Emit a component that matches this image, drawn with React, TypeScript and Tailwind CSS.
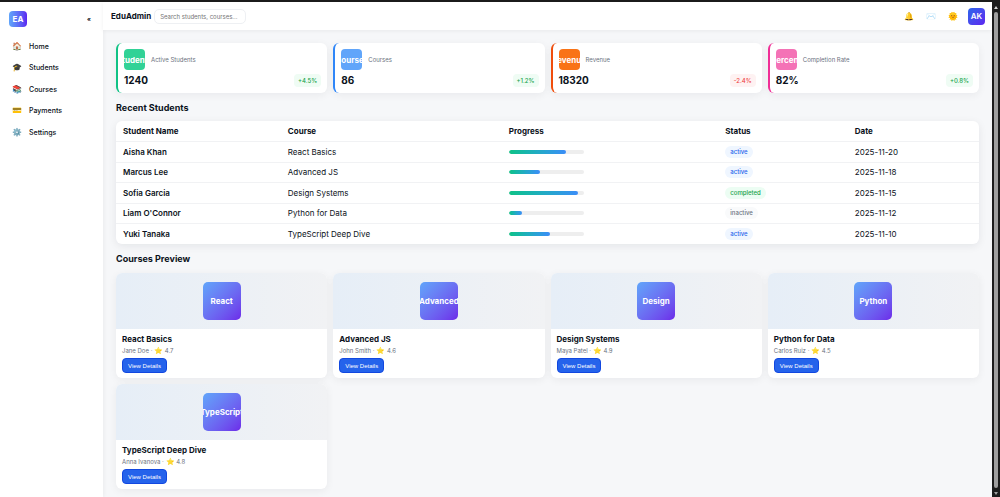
import React from 'react';

interface NavItem {
  icon: string;
  label: string;
}

interface Stat {
  tile: string;
  label: string;
  value: string;
  delta: string;
  border: string;
  fill: string;
}

interface Student {
  name: string;
  course: string;
  progress: number;
  status: 'active' | 'completed' | 'inactive';
  date: string;
}

interface Course {
  title: string;
  tile: string;
  teacher: string;
  rating: string;
}

const navItems: NavItem[] = [
  { icon: '🏠', label: 'Home' },
  { icon: '🎓', label: 'Students' },
  { icon: '📚', label: 'Courses' },
  { icon: '💳', label: 'Payments' },
  { icon: '⚙️', label: 'Settings' },
];

const stats: Stat[] = [
  { tile: 'Students', label: 'Active Students', value: '1240', delta: '+4.5%', border: 'border-[#10c285]', fill: 'bg-[#31d296]' },
  { tile: 'Courses', label: 'Courses', value: '86', delta: '+1.2%', border: 'border-[#2f86f8]', fill: 'bg-[#60a5fa]' },
  { tile: 'Revenue', label: 'Revenue', value: '18320', delta: '-2.4%', border: 'border-[#f04d0c]', fill: 'bg-[#f97316]' },
  { tile: 'Percent', label: 'Completion Rate', value: '82%', delta: '+0.8%', border: 'border-[#f02e96]', fill: 'bg-[#f472b6]' },
];

const students: Student[] = [
  { name: 'Aisha Khan', course: 'React Basics', progress: 76, status: 'active', date: '2025-11-20' },
  { name: 'Marcus Lee', course: 'Advanced JS', progress: 42, status: 'active', date: '2025-11-18' },
  { name: 'Sofia Garcia', course: 'Design Systems', progress: 92, status: 'completed', date: '2025-11-15' },
  { name: "Liam O'Connor", course: 'Python for Data', progress: 18, status: 'inactive', date: '2025-11-12' },
  { name: 'Yuki Tanaka', course: 'TypeScript Deep Dive', progress: 55, status: 'active', date: '2025-11-10' },
];

const courses: Course[] = [
  { title: 'React Basics', tile: 'React', teacher: 'Jane Doe', rating: '4.7' },
  { title: 'Advanced JS', tile: 'Advanced', teacher: 'John Smith', rating: '4.6' },
  { title: 'Design Systems', tile: 'Design', teacher: 'Maya Patel', rating: '4.9' },
  { title: 'Python for Data', tile: 'Python', teacher: 'Carlos Ruiz', rating: '4.5' },
  { title: 'TypeScript Deep Dive', tile: 'TypeScript', teacher: 'Anna Ivanova', rating: '4.8' },
];

const statusStyles = {
  active: 'bg-[#eff6ff] text-[#2563eb]',
  completed: 'bg-[#ecfdf3] text-[#16a34a]',
  inactive: 'bg-[#f9fafb] text-[#6b7280]',
};

const Sidebar: React.FC = () => (
  <aside className="w-[103px] shrink-0 bg-white shadow-[1px_0_4px_rgba(0,0,0,0.05)]">
    <div className="flex items-center justify-between pt-[9px] pl-[9px] pr-[11px]">
      <div className="flex h-4 w-[18px] items-center justify-center rounded-[4px] bg-linear-to-r from-[#60a5fa] to-[#5b21f0] text-[8px] font-bold text-white">
        EA
      </div>
      <button className="px-px text-[6px] leading-none font-bold" aria-label="Collapse sidebar">«</button>
    </div>
    <nav className="mt-[9px]">
      {navItems.map((item) => (
        <a key={item.label} href="#" className="flex items-center pl-3 text-[7px] leading-3 font-medium odd:h-[21px] even:h-[22px]">
          <span className="w-[17px] pb-0.5 text-[8px]">{item.icon}</span>
          {item.label}
        </a>
      ))}
    </nav>
  </aside>
);

const Header: React.FC = () => (
  <header className="flex h-7 items-center bg-white pl-2 pr-[7px] shadow-[0_1px_4px_rgba(0,0,0,0.06)]">
    <h1 className="text-[8px] font-bold">EduAdmin</h1>
    <input
      type="text"
      aria-label="Search"
      placeholder="Search students, courses..."
      className="ml-[3px] h-[15px] w-[92px] rounded-[5px] border border-[#eef0f3] px-[5px] text-[6px] placeholder:text-[#757575]"
    />
    <div className="ml-auto flex items-center gap-3 text-[8px]">
      <button aria-label="Notifications">🔔</button>
      <button aria-label="Messages">✉️</button>
      <button aria-label="Toggle theme">🌞</button>
      <button className="-ml-0.5 flex h-[17px] w-[17px] items-center justify-center rounded-[4px] bg-linear-to-br from-[#2563eb] to-[#5b21f0] font-semibold text-white">
        AK
      </button>
    </div>
  </header>
);

const StatCard: React.FC<{ stat: Stat }> = ({ stat }) => (
  <div className={`rounded-[6px] border-l-2 bg-white p-1.5 shadow-[0_2px_8px_rgba(15,23,42,0.06)] ${stat.border}`}>
    <div className="flex items-center gap-1.5">
      <div className={`flex h-[21px] w-[21px] items-center justify-center overflow-hidden rounded-[4px] text-[8px] font-bold text-white ${stat.fill}`}>
        {stat.tile}
      </div>
      <span className="text-[6px] leading-2 text-[#6b7280]">{stat.label}</span>
    </div>
    <div className="mt-1 flex h-[13px] items-center justify-between">
      <span className="text-[10px] font-bold">{stat.value}</span>
      <span
        className={`rounded-[4px] px-1 py-px text-[6px] font-medium leading-[11px] ${
          stat.delta.startsWith('-') ? 'bg-[#fef2f2] text-[#ef4444]' : 'bg-[#effcf4] text-[#16a34a]'
        }`}
      >
        {stat.delta}
      </span>
    </div>
  </div>
);

const StudentsTable: React.FC = () => (
  <div className="overflow-hidden rounded-[6px] bg-white shadow-[0_2px_8px_rgba(15,23,42,0.08)]">
    <table className="w-full table-fixed text-left text-[8px] leading-[10px]">
      <thead>
        <tr className="h-5 border-b border-[#f1f2f4]">
          <th className="w-[19.1%] pl-[7px] font-bold">Student Name</th>
          <th className="w-[25.6%] pl-[7px] font-bold">Course</th>
          <th className="w-[25.1%] pl-[7px] font-bold">Progress</th>
          <th className="w-[15%] pl-[7px] font-bold">Status</th>
          <th className="w-[15.2%] pl-[7px] font-bold">Date</th>
        </tr>
      </thead>
      <tbody>
        {students.map((student) => (
          <tr key={student.name} className="border-b border-[#f1f2f4] odd:h-[21px] even:h-5 last:border-0">
            <td className="pl-[7px] font-semibold">{student.name}</td>
            <td className="pl-[7px]">{student.course}</td>
            <td className="pl-[7px]">
              <div className="h-1 w-[75px] overflow-hidden rounded-full bg-[#eeeeee]">
                <div
                  className="h-full rounded-full bg-linear-to-r from-[#10c285] to-[#3b8cf8]"
                  style={{ width: `${student.progress}%` }}
                />
              </div>
            </td>
            <td className="pl-[7px]">
              <span className={`inline-block rounded-full px-[5px] text-[6px] leading-3 font-medium ${statusStyles[student.status]}`}>
                {student.status}
              </span>
            </td>
            <td className="pl-[7px]">{student.date}</td>
          </tr>
        ))}
      </tbody>
    </table>
  </div>
);

const CourseCard: React.FC<{ course: Course }> = ({ course }) => (
  <article className="overflow-hidden rounded-[6px] bg-white shadow-[0_2px_8px_rgba(15,23,42,0.06)]">
    <div className="flex h-14 items-center justify-center bg-linear-to-r from-[#e6eef7] to-[#f1f2f4]">
      <div className="flex h-[38px] w-[38px] items-center justify-center overflow-hidden rounded-[5px] bg-linear-to-br from-[#60a5fa] to-[#6d28e9] text-[8px] font-bold text-white">
        {course.tile}
      </div>
    </div>
    <div className="px-1.5 pt-[5px] pb-[5px]">
      <h3 className="text-[8px] leading-[11px] font-bold">{course.title}</h3>
      <p className="text-[6px] leading-3 text-[#6b7280]">
        {course.teacher} · <span className="text-[7px]">⭐</span> {course.rating}
      </p>
      <button className="mt-px block h-[15px] rounded-[4px] border border-[#1248e0] bg-[#2563eb] px-[5px] font-['Liberation_Sans',sans-serif] text-[6px] leading-3 text-white">
        View Details
      </button>
    </div>
  </article>
);

const Scrollbar: React.FC = () => (
  <div className="flex w-2 shrink-0 flex-col items-center justify-between bg-[#1c1c1c] py-0.5" aria-hidden="true">
    <svg viewBox="0 0 4 3" className="mt-0.5 h-[3px] w-1 fill-[#d4d4d4]">
      <path d="M2 0 4 3H0z" />
    </svg>
    <div className="mt-[3px] mb-1 w-1 flex-1 rounded-full bg-[#9f9f9f]" />
    <svg viewBox="0 0 4 3" className="h-[3px] w-1 fill-[#9f9f9f]">
      <path d="M0 0H4L2 3z" />
    </svg>
  </div>
);

const App: React.FC = () => {
  return (
    <div className="flex min-h-screen border-t-2 border-[#1c1c1c] bg-[#f6f7f9] font-['Inter',sans-serif] text-[#0b1220]">
      <Sidebar />
      <div className="min-w-0 flex-1">
        <Header />
        <main className="px-[13px] pt-[13px] pb-[7px]">
          <section className="grid grid-cols-4 gap-1.5">
            {stats.map((stat) => (
              <StatCard key={stat.label} stat={stat} />
            ))}
          </section>
          <h2 className="pt-[9px] pb-[7px] text-[9px] leading-3 font-bold">Recent Students</h2>
          <StudentsTable />
          <h2 className="pt-[9px] pb-2 text-[9px] leading-3 font-bold">Courses Preview</h2>
          <section className="grid grid-cols-4 gap-1.5">
            {courses.map((course) => (
              <CourseCard key={course.title} course={course} />
            ))}
          </section>
        </main>
      </div>
      <Scrollbar />
    </div>
  );
};

export default App;
